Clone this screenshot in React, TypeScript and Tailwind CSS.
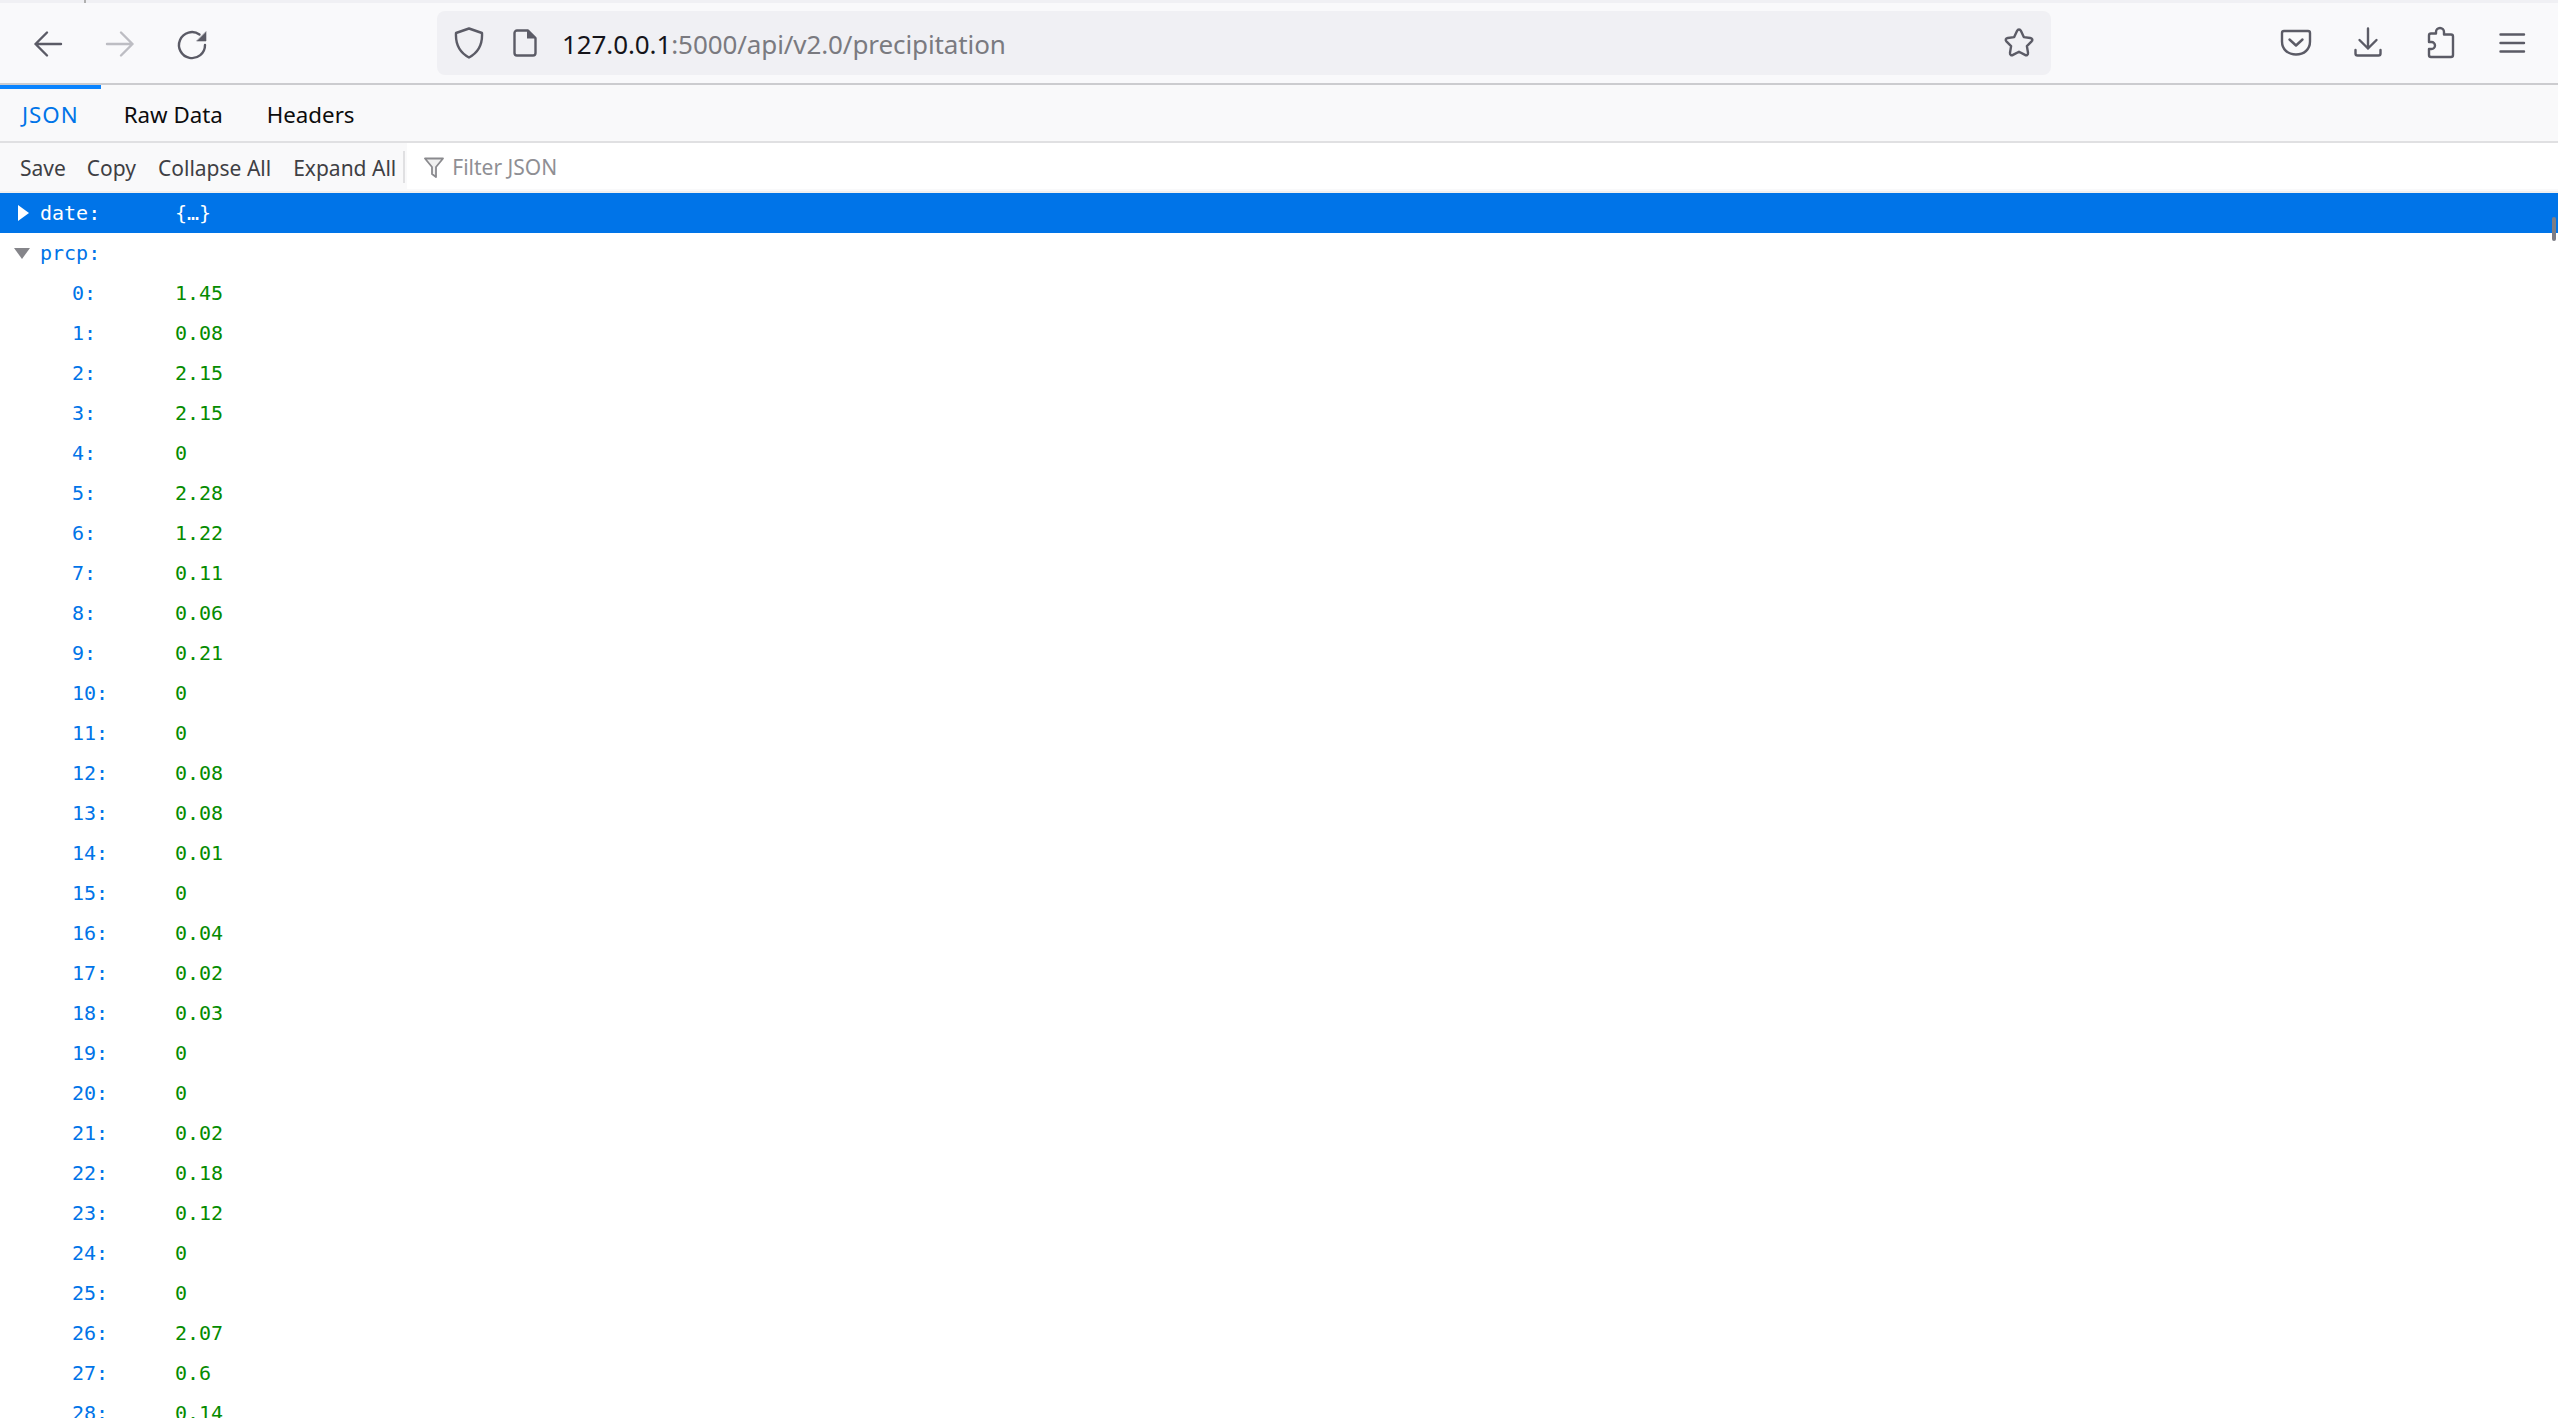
const ui = "font-['Noto_Sans',sans-serif]";

const values = ["1.45","0.08","2.15","2.15","0","2.28","1.22","0.11","0.06","0.21","0","0","0.08","0.08","0.01","0","0.04","0.02","0.03","0","0","0.02","0.18","0.12","0","0","2.07","0.6","0.14"];

function Icon({ children, className = "text-[#5b5b66]" }: { children: React.ReactNode; className?: string }) {
  return (
    <div className="w-[72px] h-[40px] flex items-center justify-center shrink-0">
      <svg width="36" height="36" viewBox="0 0 36 36" fill="none" stroke="currentColor" strokeWidth="2.4" strokeLinecap="round" strokeLinejoin="round" className={className}>
        {children}
      </svg>
    </div>
  );
}

function Row({ k, indent, selected, arrow, children }: { k: string; indent: string; selected?: boolean; arrow?: React.ReactNode; children?: React.ReactNode }) {
  return (
    <div className={`h-[40px] shrink-0 flex items-center font-['DejaVu_Sans_Mono',monospace] text-[20px] ${selected ? "bg-[#0074e8] text-white" : "text-[#0074e8]"}`}>
      <div className={`w-[175px] shrink-0 flex items-center ${indent}`}>
        {arrow}
        {k}:
      </div>
      <div className={selected ? "text-white" : "text-[#058b00]"}>{children}</div>
    </div>
  );
}

export default function App() {
  return (
    <div className={`relative h-[1418px] w-full overflow-hidden bg-white ${ui}`}>
      {/* window top strip */}
      <div className="h-[3px] bg-[#f0f0f4] pl-[84px]">
        <div className="h-[3px] w-[2px] bg-[#b0b0b0]" />
      </div>

      {/* browser toolbar */}
      <div className="h-[80px] bg-[#f9f9fb] flex items-center pl-[12px] pr-[10px]">
        <Icon>
          <path d="M31 19H5.500M17 7.500 5.500 19 17 30.500" />
        </Icon>
        <Icon className="text-[#bdbdc3]">
          <path d="M5 19h25.500M19 7.500 30.500 19 19 30.500" />
        </Icon>
        <Icon>
          <path d="M31 20A13 13 0 1 1 25.500 9.500" />
          <path d="M32 7V16H23z" fill="currentColor" stroke="currentColor" strokeWidth="0.6" />
        </Icon>

        <div className="ml-[209px] w-[1614px] h-[64px] rounded-[8px] bg-[#f0f0f4] flex items-center">
          <div className="w-[64px] flex justify-center">
            <svg width="30" height="32" viewBox="0 0 30 32" fill="none" stroke="#5b5b66" strokeWidth="2.400" strokeLinejoin="round">
              <path d="M15 1.500 28 6c.500 9.500-2.500 19-13 24.500C4.500 25 1.500 15.500 2 6z" />
            </svg>
          </div>
          <div className="w-[24px] ml-[12px] flex justify-center">
            <svg width="24" height="28" viewBox="0 0 24 28" fill="none" stroke="#5b5b66" strokeWidth="2.400" strokeLinejoin="round">
              <path d="M15 1.500H4A2.500 2.500 0 0 0 1.500 4v20A2.500 2.500 0 0 0 4 26.500h16a2.500 2.500 0 0 0 2.500-2.500V9z" />
              <path d="M14 1.500 23 9.500h-9z" fill="#5b5b66" stroke="none" />
            </svg>
          </div>
          <div className="ml-[25px] pt-[2px] text-[26px] leading-none whitespace-nowrap tracking-[-0.1px]">
            <span className="text-[#15141a]">127.0.0.1</span>
            <span className="text-[#7a7a80]">:5000/api/v2.0/precipitation</span>
          </div>
          <div className="ml-auto mr-[15px]">
            <svg width="34" height="34" viewBox="0 0 34 34" fill="none" stroke="#5b5b66" strokeWidth="2.400" strokeLinejoin="round">
              <path d="M17 3.500c1 0 1.600.700 2 1.600l2.800 6 6.500.900c2 .300 2.600 2 1.300 3.400l-4.700 4.700 1.100 6.700c.300 2-1.300 3-3 2.100L17 25.700l-6 3.200c-1.700.900-3.300-.100-3-2.100l1.100-6.700-4.700-4.700C3.100 14 3.700 12.300 5.700 12l6.500-.900 2.800-6c.400-.900 1-1.600 2-1.600z" />
            </svg>
          </div>
        </div>

        <div className="ml-auto flex">
          <Icon>
            <path d="M6 6h24a2 2 0 0 1 2 2v8.500c0 8-6 13-14 13s-14-5-14-13V8a2 2 0 0 1 2-2z" />
            <path d="m11.500 14.500 6.500 6 6.500-6" />
          </Icon>
          <Icon>
            <path d="M18 3.500v20M9.500 15l8.500 8.500 8.500-8.500M5.500 25v3.500a2 2 0 0 0 2 2h21a2 2 0 0 0 2-2V25" />
          </Icon>
          <Icon>
            <path d="M14 8.500V7a4 4 0 0 1 8 0v2.500h7a2 2 0 0 1 2 2V30a2 2 0 0 1-2 2H9a2 2 0 0 1-2-2v-6h2.500a3.500 3.500 0 0 0 0-7H7v-6.500a2 2 0 0 1 2-2z" />
          </Icon>
          <Icon>
            <path d="M6.500 9.500h23.500M6.500 18h23.500M6.500 26.500h23.500" />
          </Icon>
        </div>
      </div>
      <div className="h-[2px] bg-[#cccccf]" />

      {/* json viewer tabs */}
      <div className="relative h-[56px] pt-[3px] bg-[#f9f9fa] flex items-center text-[22.300px] text-[#0c0c0d]">
        <div className="absolute left-0 top-0 h-[4px] w-[101px] bg-[#0a84ff]" />
        <span className="ml-[22px] text-[#0074e8] tracking-[1px]">JSON</span>
        <span className="ml-[45px]">Raw Data</span>
        <span className="ml-[44px]">Headers</span>
      </div>
      <div className="h-[2px] bg-[#e0e0e2]" />

      {/* json viewer toolbar */}
      <div className="h-[48px] bg-[#f9f9fa] flex items-stretch text-[21px] text-[#3f3f44]">
        <div className="flex items-center pl-[20px] pt-[3px]">
          <span>Save</span>
          <span className="ml-[21px]">Copy</span>
          <span className="ml-[22px]">Collapse All</span>
          <span className="ml-[22px]">Expand All</span>
        </div>
        <div className="ml-[7px] my-[8px] w-[2px] bg-[#e0e0e2]" />
        <div className="ml-[2px] flex-1 bg-white flex items-center pl-[17px] pt-[3px] mb-[2px]">
          <svg width="20" height="22" viewBox="0 0 20 22" fill="#f0f0f0" stroke="#8a8a8e" strokeWidth="1.800" strokeLinejoin="round">
            <path d="M1 1.500h18l-7 8.500v10l-4-3v-7z" />
          </svg>
          <span className="ml-[8px] text-[#8f8f94]">Filter JSON</span>
        </div>
      </div>
      <div className="h-[2px] bg-[#f0f0f0]" />

      {/* json tree */}
      <div className="flex flex-col">
        <Row
          k="date"
          indent="pl-[18px]"
          selected
          arrow={
            <svg width="11" height="16" viewBox="0 0 11 16" className="mr-[11px]">
              <path d="M0 0 11 8 0 16z" fill="#ffffff" />
            </svg>
          }
        >
          {"{…}"}
        </Row>
        <Row
          k="prcp"
          indent="pl-[14px]"
          arrow={
            <svg width="16" height="11" viewBox="0 0 16 11" className="mr-[10px]">
              <path d="M0 0H16L8 11z" fill="#85858a" />
            </svg>
          }
        />
        {values.map((v, i) => (
          <Row key={i} k={String(i)} indent="pl-[72px]">
            {v}
          </Row>
        ))}
      </div>

      {/* overlay scrollbar */}
      <div className="absolute right-[2px] top-[217px] h-[24px] w-[4px] rounded-full bg-[#7d7d85]" />
    </div>
  );
}
